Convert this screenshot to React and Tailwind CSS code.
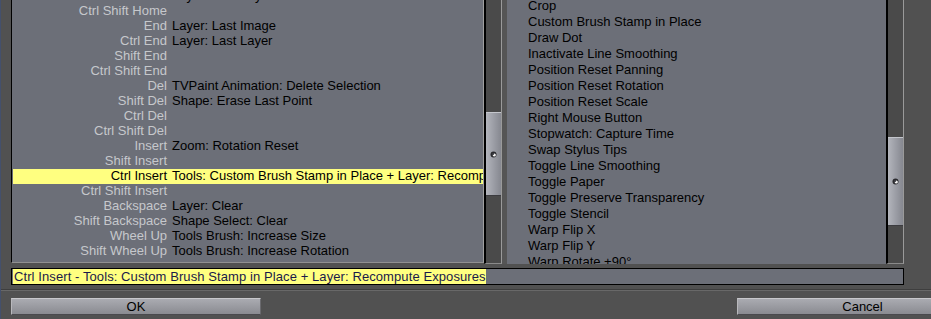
import React from 'react';

const FONT = { fontFamily: '"Liberation Sans", Arial, sans-serif' };

const leftRows = [
  ['Ctrl Home', 'Layer: First Layer'],
  ['Ctrl Shift Home', ''],
  ['End', 'Layer: Last Image'],
  ['Ctrl End', 'Layer: Last Layer'],
  ['Shift End', ''],
  ['Ctrl Shift End', ''],
  ['Del', 'TVPaint Animation: Delete Selection'],
  ['Shift Del', 'Shape: Erase Last Point'],
  ['Ctrl Del', ''],
  ['Ctrl Shift Del', ''],
  ['Insert', 'Zoom: Rotation Reset'],
  ['Shift Insert', ''],
  ['Ctrl Insert', 'Tools: Custom Brush Stamp in Place + Layer: Recompute Exposures', true],
  ['Ctrl Shift Insert', ''],
  ['Backspace', 'Layer: Clear'],
  ['Shift Backspace', 'Shape Select: Clear'],
  ['Wheel Up', 'Tools Brush: Increase Size'],
  ['Shift Wheel Up', 'Tools Brush: Increase Rotation'],
];

const rightRows = [
  'Crop',
  'Custom Brush Stamp in Place',
  'Draw Dot',
  'Inactivate Line Smoothing',
  'Position Reset Panning',
  'Position Reset Rotation',
  'Position Reset Scale',
  'Right Mouse Button',
  'Stopwatch: Capture Time',
  'Swap Stylus Tips',
  'Toggle Line Smoothing',
  'Toggle Paper',
  'Toggle Preserve Transparency',
  'Toggle Stencil',
  'Warp Flip X',
  'Warp Flip Y',
  'Warp Rotate +90°',
];

function Grip() {
  return (
    <svg width="7" height="7" viewBox="0 0 7 7">
      <circle cx="3.5" cy="3.5" r="3" fill="#2a2a2e" />
      <circle cx="4.3" cy="4" r="1.6" fill="#f4f4f4" />
      <circle cx="3" cy="3" r="1.1" fill="#3a3a40" />
    </svg>
  );
}

function Scrollbar({ thumbTop, thumbHeight }) {
  return (
    <div className="flex h-full w-[18px] shrink-0 flex-col border-l-2 border-r border-b border-l-black border-r-[#9a9a9a] border-b-[#8a8a8a] bg-[#4a4a4a]">
      <div style={{ height: thumbTop }} className="shrink-0" />
      <div
        style={{ height: thumbHeight }}
        className="flex shrink-0 items-center justify-center border-t border-b border-t-[#c4c6cc] border-b-[#3c3c40] bg-gradient-to-r from-[#b3b5bc] via-[#9c9ea6] to-[#868890]"
      >
        <Grip />
      </div>
    </div>
  );
}

export default function App() {
  return (
    <div
      className="flex h-[319px] w-[931px] flex-col overflow-hidden border-l border-l-[#44506c] bg-[#515151] text-[13px]"
      style={FONT}
    >
      <div className="flex h-[264px] shrink-0">
        <div className="w-[10px] shrink-0" />
        {/* left list */}
        <div className="flex h-[263px] w-[473px] shrink-0 flex-col overflow-hidden border-l border-r border-b border-l-black border-r-[#a0a0a0] border-b-[#909090] bg-[#6c6f78]">
          <div className="-mt-[11px] flex flex-col">
            {leftRows.map(([key, action, sel], i) => (
              <div
                key={i}
                className={`ml-[1px] flex h-[15px] shrink-0 items-start whitespace-nowrap leading-[14px] ${
                  sel ? 'bg-[#ffff80]' : ''
                }`}
              >
                <span className={`w-[154px] shrink-0 text-right ${sel ? 'text-black' : 'text-[#c6c8cc]'}`}>
                  {key}
                </span>
                <span className="ml-[5px] text-black">{action}</span>
              </div>
            ))}
          </div>
        </div>
        <Scrollbar thumbTop={112} thumbHeight={84} />
        <div className="w-[5px] shrink-0 bg-[#555555]" />
        {/* right list */}
        <div className="h-[264px] w-[379px] shrink-0 overflow-hidden bg-[#6c6f78] pl-[21px]">
          <div className="-mt-[2px] flex flex-col">
            {rightRows.map((t) => (
              <div key={t} className="h-[16px] shrink-0 whitespace-nowrap leading-[16px] text-black">
                {t}
              </div>
            ))}
          </div>
        </div>
        <Scrollbar thumbTop={137} thumbHeight={89} />
      </div>

      {/* status line */}
      <div className="mt-[4px] ml-[10px] flex h-[17px] w-[893px] shrink-0 items-center overflow-hidden border border-black bg-[#6c6f78] pl-[1px]">
        <span className="whitespace-nowrap bg-[#ffff80] pl-[1px] leading-[15px] tracking-[0.09px] text-[#1a1a4a]">
          Ctrl Insert - Tools: Custom Brush Stamp in Place + Layer: Recompute Exposures
        </span>
      </div>

      <div className="mt-[4px] h-[2px] shrink-0 border-t border-b border-t-[#3e3e3e] border-b-[#686868]" />

      {/* buttons */}
      <div className="mt-[7px] ml-[10px] flex h-[17px] shrink-0 justify-between">
        <button
          type="button"
          className="h-[17px] w-[250px] shrink-0 border-t border-l border-b border-r border-t-[#c8c8cc] border-l-[#b8b8bc] border-b-[#4a4a4e] border-r-[#6a6a6e] bg-gradient-to-b from-[#aaabb1] to-[#8a8b91] text-[13px] leading-[15px] text-black"
        >
          OK
        </button>
        <button
          type="button"
          className="-mr-[56px] h-[17px] w-[250px] shrink-0 border-t border-l border-b border-t-[#c8c8cc] border-l-[#b8b8bc] border-b-[#4a4a4e] bg-gradient-to-b from-[#aaabb1] to-[#8a8b91] text-[13px] leading-[15px] text-black"
        >
          Cancel
        </button>
      </div>
    </div>
  );
}
